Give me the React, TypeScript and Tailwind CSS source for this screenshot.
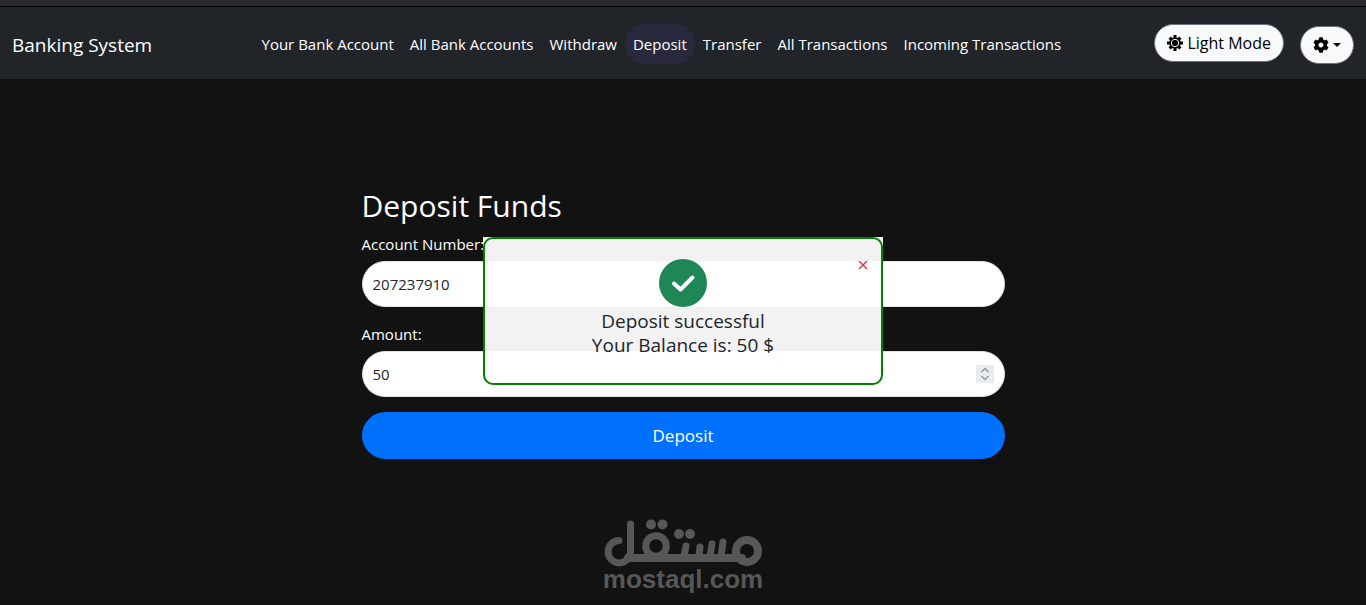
import { useState } from 'react'
import { FaCog } from 'react-icons/fa'
import { X } from 'lucide-react'

const links = [
  'Your Bank Account',
  'All Bank Accounts',
  'Withdraw',
  'Deposit',
  'Transfer',
  'All Transactions',
  'Incoming Transactions',
]

function SunIcon() {
  return (
    <svg viewBox="0 0 16 16" className="h-4 w-4" aria-hidden="true">
      <path
        stroke="currentColor"
        strokeWidth="3"
        d="M8 0V16M0 8H16M2.6 2.6 13.4 13.4M13.4 2.6 2.6 13.4"
      />
      <circle cx="8" cy="8" r="5.8" fill="currentColor" />
      <circle cx="8" cy="8" r="3.7" fill="none" stroke="#f8f9fa" strokeWidth="1" />
    </svg>
  )
}

function Navbar() {
  return (
    <header className="flex h-[72px] items-center justify-between bg-[#212529] px-3 pt-1">
      <a href="#" className="mr-4 text-[19px] text-white">Banking System</a>
      <nav className="mb-[3px] flex items-center">
        {links.map((label) => (
          <a
            key={label}
            href="#"
            className={`rounded-[20px] px-2 py-2 text-[15px] leading-6 whitespace-nowrap text-white ${label === 'Deposit' ? 'bg-[#29293d]' : ''}`}
          >
            {label}
          </a>
        ))}
      </nav>
      <div className="flex items-center gap-4">
        <button className="mb-1 flex h-[38px] items-center gap-1 rounded-full border border-[#6c757d] bg-[#f8f9fa] px-3 text-base text-black">
          <SunIcon />
          Light Mode
        </button>
        <button aria-label="Settings" className="flex h-[38px] items-center gap-1 rounded-full border border-[#6c757d] bg-[#f8f9fa] px-3 text-black">
          <FaCog size={16} />
          <span className="border-x-4 border-t-4 border-x-transparent border-t-black" />
        </button>
      </div>
    </header>
  )
}

function SuccessDialog({ onClose }: { onClose: () => void }) {
  return (
    <div role="dialog" aria-label="Deposit result" className="absolute top-[237px] left-1/2 w-[400px] -translate-x-1/2 bg-white/95">
      <div className="flex h-[148px] flex-col items-center rounded-[10px] border-2 border-[#008000] pt-5 text-[#212529]">
        <button onClick={onClose} aria-label="Close" className="absolute top-5 right-3 flex h-4 w-4 items-center justify-center text-[#dc3545]">
          <X size={14} strokeWidth={2.5} />
        </button>
        <svg viewBox="0 0 48 48" className="h-12 w-12" aria-hidden="true">
          <circle cx="24" cy="24" r="24" fill="#1f8756" />
          <path d="M15 24.5 21.5 30.5 33.5 18.5" fill="none" stroke="#fff" strokeWidth="4" strokeLinecap="round" strokeLinejoin="round" />
        </svg>
        <p className="mt-0.5 text-center text-[19px] leading-6">
          Deposit successful
          <br />
          Your Balance is: 50 $
        </p>
      </div>
    </div>
  )
}

function Watermark() {
  return (
    <div className="mt-[60px] flex flex-col items-center text-[#575757]">
      <svg viewBox="0 0 158 48" className="h-12 w-[158px]" fill="none" stroke="currentColor" strokeWidth="7" strokeLinecap="round" aria-label="mostaql" role="img">
        <path d="M15 21.5A11.2 11.2 0 1 0 26.5 33V5" />
        <path d="M24 39H138" strokeWidth="8" />
        <circle cx="52" cy="27" r="10.3" />
        <circle cx="143" cy="32" r="11" strokeWidth="8" />
        <path d="M80 37 82 27M95 37 96 28M106 37 108 25M117 37 119 23" strokeWidth="7" />
        <g fill="currentColor" stroke="none">
          <circle cx="47" cy="5.5" r="5" />
          <circle cx="58.5" cy="5.5" r="5" />
          <circle cx="75" cy="15" r="5" />
          <circle cx="86" cy="15" r="5" />
        </g>
      </svg>
      <span className="font-['Liberation_Sans'] text-[26px] leading-6 font-bold">mostaql.com</span>
    </div>
  )
}

export default function App() {
  const [open, setOpen] = useState(true)
  const [account, setAccount] = useState('207237910')
  const [amount, setAmount] = useState('50')

  return (
    <div className="relative min-h-screen bg-[#121212] font-['Open_Sans','Noto_Sans',sans-serif] text-white">
      <div className="h-[7px] border-b border-black bg-[#2b2a33]" />
      <Navbar />
      <main className="mx-auto max-w-[643px] pt-[108px]">
        <h1 className="text-[30px] leading-[38px]">Deposit Funds</h1>
        <form onSubmit={(e) => e.preventDefault()} className="mt-[7px]">
          <label htmlFor="account" className="block text-[15px] leading-6">Account Number:</label>
          <input
            id="account"
            value={account}
            onChange={(e) => setAccount(e.target.value)}
            className="mt-[5px] mb-[15px] block h-[46px] w-full rounded-full border border-[#dee2e6] bg-white px-[10px] text-[15px] text-[#212529]"
          />
          <label htmlFor="amount" className="block text-[15px] leading-6">Amount:</label>
          <div className="relative mt-[5px]">
            <input
              id="amount"
              inputMode="numeric"
              value={amount}
              onChange={(e) => setAmount(e.target.value)}
              className="block h-[46px] w-full rounded-full border border-[#dee2e6] bg-white px-[10px] text-[15px] text-[#212529]"
            />
            <svg viewBox="0 0 18 18" className="absolute top-[14px] right-[11px] h-[18px] w-[18px] bg-[#e9ecee]" fill="none" stroke="#909597" strokeWidth="1.3" aria-hidden="true">
              <path d="M5.5 7 9 3.5 12.5 7M5.5 11 9 14.5 12.5 11" />
            </svg>
          </div>
          <button className="mt-[15px] h-[47px] w-full rounded-full bg-[#0070ff] text-[17px]">Deposit</button>
        </form>
        <Watermark />
      </main>
      {open && <SuccessDialog onClose={() => setOpen(false)} />}
    </div>
  )
}
